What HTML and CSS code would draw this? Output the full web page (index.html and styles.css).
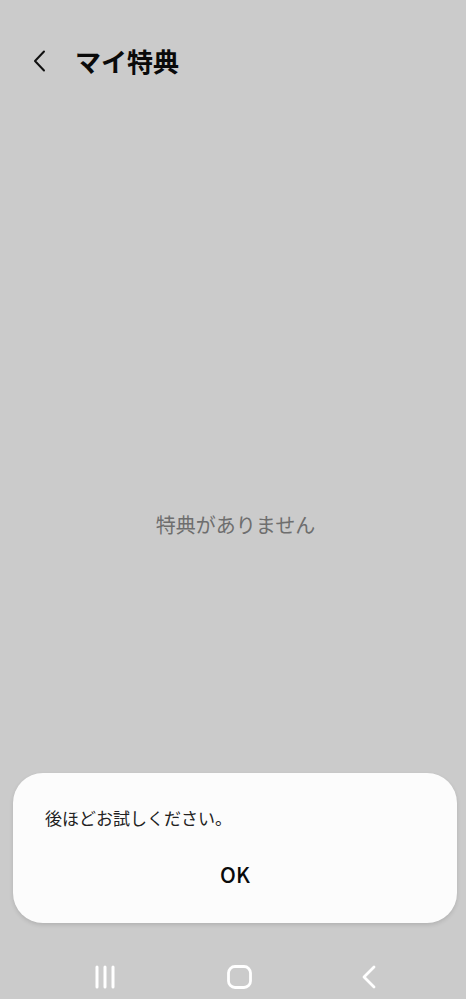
FILE: index.html
```html
<!DOCTYPE html>
<html lang="ja">
<head>
    <meta charset="UTF-8">
    <meta name="viewport" content="width=device-width, initial-scale=1.0">
    <title>マイ特典</title>
    <link rel="stylesheet" href="styles.css">
</head>
<body>
    <div class="screen">
        <div class="header">
            <svg class="back" width="14" height="22" viewBox="0 0 14 22">
                <path d="M12 1.5 L3 11 L12 20.5" fill="none" stroke="#111" stroke-width="2" stroke-linecap="round" stroke-linejoin="round"/>
            </svg>
            <h1>マイ特典</h1>
        </div>

        <div class="main">
            <p class="empty">特典がありません</p>
        </div>

        <div class="navbar">
            <svg width="22" height="24" viewBox="0 0 22 24">
                <g stroke="#fff" stroke-width="3" stroke-linecap="round">
                    <line x1="3" y1="2" x2="3" y2="22"/>
                    <line x1="11" y1="2" x2="11" y2="22"/>
                    <line x1="19" y1="2" x2="19" y2="22"/>
                </g>
            </svg>
            <svg width="25" height="24" viewBox="0 0 25 24">
                <rect x="1.5" y="1.5" width="22" height="21" rx="6.5" fill="none" stroke="#fff" stroke-width="2.8"/>
            </svg>
            <svg width="14" height="24" viewBox="0 0 14 24">
                <path d="M12 2 L2 12 L12 22" fill="none" stroke="#fff" stroke-width="2.8" stroke-linecap="round" stroke-linejoin="round"/>
            </svg>
        </div>

        <div class="dialog">
            <p class="dialog-msg">後ほどお試しください。</p>
            <div class="dialog-btn">OK</div>
        </div>
    </div>
</body>
</html>
```

FILE: styles.css
```css
body {
    margin: 0;
    font-family: "Noto Sans CJK JP", "Noto Sans", sans-serif;
    background-color: #cbcbcb;
}
.screen {
    position: relative;
    width: 466px;
    height: 999px;
    display: flex;
    flex-direction: column;
    overflow: hidden;
}
.header {
    height: 83px;
    box-sizing: border-box;
    padding: 39px 0 0 32px;
    display: flex;
    align-items: center;
    align-self: flex-start;
}
.back { margin-right: 29px; }
.header h1 {
    margin: 0;
    font-size: 26px;
    font-weight: 700;
    color: #0a0a0a;
    line-height: 44px;
}
.main {
    flex: 1;
    display: flex;
    align-items: center;
    justify-content: center;
    padding: 18px 0 0 5px;
}
.empty {
    margin: 0;
    font-size: 20px;
    color: #6e6e6e;
}
.navbar {
    height: 52px;
    box-sizing: border-box;
    display: flex;
    align-items: center;
    justify-content: space-between;
    padding: 8px 90px 0 94px;
}
.dialog {
    position: absolute;
    left: 13px;
    right: 9px;
    bottom: 76px;
    height: 150px;
    box-sizing: border-box;
    background: #fcfcfc;
    border-radius: 30px;
    box-shadow: 0 2px 4px rgba(0, 0, 0, 0.12);
    padding: 32px 32px 0 32px;
}
.dialog-msg {
    margin: 0;
    font-size: 17px;
    line-height: 26px;
    color: #222;
}
.dialog-btn {
    margin-top: 25px;
    text-align: center;
    font-size: 21px;
    font-weight: 500;
    color: #0a0a0a;
    line-height: 36px;
}
```
